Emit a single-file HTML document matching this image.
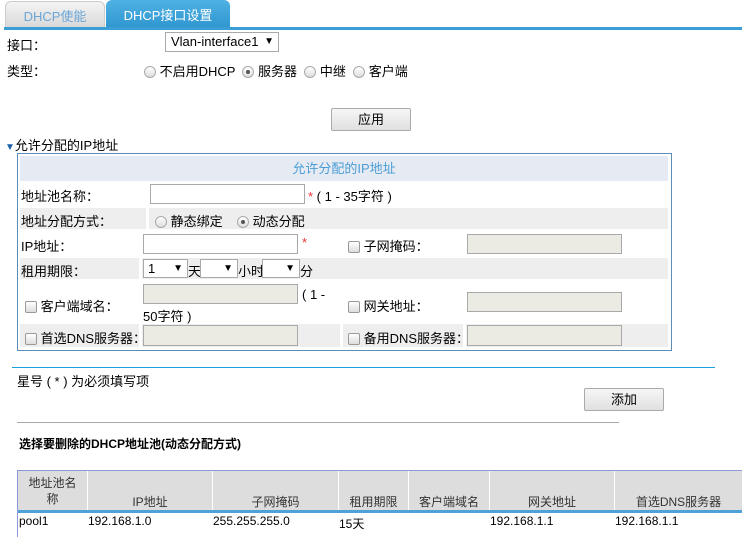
<!DOCTYPE html>
<html><head><meta charset="utf-8"><style>
body{margin:0;width:742px;height:537px;overflow:hidden;background:#fff;font-family:"Liberation Sans","Noto Sans CJK SC",sans-serif;font-size:13px;color:#000;position:relative}
.a{position:absolute;white-space:nowrap}
.rad{display:inline-block;width:12px;height:12px;border-radius:50%;border:1px solid #aaa;background:linear-gradient(#fff,#ddd);vertical-align:-2px;position:relative;box-sizing:border-box}
.rad.on::after{content:"";position:absolute;left:3px;top:3px;width:4px;height:4px;border-radius:50%;background:#555}
.cb{display:inline-block;width:12px;height:12px;border-radius:2px;border:1px solid #999;background:linear-gradient(#fff,#ddd);vertical-align:-2px;box-sizing:border-box}
.inp{position:absolute;border:1px solid #a9a9a9;background:#fff;box-sizing:border-box}
.dis{background:#ebebe4}
.btn{position:absolute;border:1px solid #aaa;background:linear-gradient(#f6f6f6,#e0e0e0);box-sizing:border-box;text-align:center;font-size:13px;border-radius:2px}
.sel{position:absolute;border:1px solid #a9a9a9;background:#fff;box-sizing:border-box;font-size:13px}
.sel::after{content:"▼";position:absolute;right:4px;top:50%;transform:translateY(-50%);font-size:10px;line-height:10px}
.band{position:absolute;background:#eeeeee}
.th{position:absolute;top:471px;height:39px;background:#dddddd;text-align:center;font-size:12px;color:#333;box-sizing:border-box;border-left:1px solid #fff}
.tb{font-size:12px}
</style></head><body>
<div class="a" style="left:5px;top:1px;width:100px;height:27px;background:linear-gradient(#f4f4f4,#d9d9d9);border-radius:6px 6px 0 0;border:1px solid #ccc;box-sizing:border-box;color:#6ba6d6;font-size:13px;text-align:center;line-height:30px">DHCP使能</div>
<div class="a" style="left:106px;top:0;width:124px;height:28px;background:linear-gradient(#4fb1e3,#2f96d0);border-radius:6px 6px 0 0;color:#fff;font-size:13px;text-align:center;line-height:32px">DHCP接口设置</div>
<div class="a" style="left:4px;top:27px;width:738px;height:3px;background:#3a9fd5"></div>

<div class="a" style="left:7px;top:35px">接口：</div>
<div class="sel" style="left:165px;top:32px;width:114px;height:20px;padding-left:5px;line-height:18px">Vlan-interface1</div>
<div class="a" style="left:7px;top:61px">类型：</div>
<div class="a" style="left:144px;top:61px"><span class="rad"></span> 不启用DHCP &nbsp;<span class="rad on"></span> 服务器 &nbsp;<span class="rad"></span> 中继 &nbsp;<span class="rad"></span> 客户端</div>
<div class="btn" style="left:331px;top:108px;width:80px;height:23px;line-height:21px">应用</div>
<div class="a" style="left:5px;top:135px"><span style="color:#1a5fa8;font-size:10px">▼</span>允许分配的IP地址</div>

<div class="a" style="left:17px;top:153px;width:655px;height:198px;border:1px solid #5b8db8;box-sizing:border-box"></div>
<div class="a" style="left:20px;top:156px;width:648px;height:25px;background:#e6eaf2;color:#4a9ed6;text-align:center;line-height:25px">允许分配的IP地址</div>
<div class="band" style="left:20px;top:208px;width:126px;height:21px"></div>
<div class="band" style="left:149px;top:208px;width:519px;height:21px"></div>
<div class="band" style="left:20px;top:258px;width:119px;height:21px"></div>
<div class="band" style="left:142px;top:258px;width:526px;height:21px"></div>
<div class="band" style="left:20px;top:324px;width:119px;height:23px"></div>
<div class="band" style="left:142px;top:324px;width:198px;height:23px"></div>
<div class="band" style="left:343px;top:324px;width:120px;height:23px"></div>
<div class="band" style="left:466px;top:324px;width:202px;height:23px"></div>

<div class="a" style="left:21px;top:186px">地址池名称：</div>
<div class="inp" style="left:150px;top:184px;width:155px;height:20px"></div>
<div class="a" style="left:308px;top:186px"><span style="color:#e33">*</span> ( 1 - 35字符 )</div>
<div class="a" style="left:21px;top:211px">地址分配方式：</div>
<div class="a" style="left:155px;top:211px"><span class="rad"></span> 静态绑定 &nbsp;&nbsp;&nbsp;<span class="rad on"></span> 动态分配</div>
<div class="a" style="left:21px;top:236px">IP地址：</div>
<div class="inp" style="left:143px;top:234px;width:155px;height:20px"></div>
<div class="a" style="left:302px;top:235px;color:#e33">*</div>
<div class="a" style="left:348px;top:236px"><span class="cb"></span> 子网掩码：</div>
<div class="inp dis" style="left:467px;top:234px;width:155px;height:20px"></div>
<div class="a" style="left:21px;top:261px">租用期限：</div>
<div class="sel" style="left:143px;top:259px;width:45px;height:19px;padding-left:4px;line-height:17px">1</div>
<div class="a" style="left:188px;top:261px">天</div>
<div class="sel" style="left:200px;top:259px;width:38px;height:19px"></div>
<div class="a" style="left:238px;top:261px">小时</div>
<div class="sel" style="left:262px;top:259px;width:38px;height:19px"></div>
<div class="a" style="left:300px;top:261px">分</div>
<div class="a" style="left:25px;top:296px"><span class="cb"></span> 客户端域名：</div>
<div class="inp dis" style="left:143px;top:284px;width:155px;height:20px"></div>
<div class="a" style="left:302px;top:287px">( 1 -</div>
<div class="a" style="left:143px;top:306px">50字符 )</div>
<div class="a" style="left:348px;top:296px"><span class="cb"></span> 网关地址：</div>
<div class="inp dis" style="left:467px;top:292px;width:155px;height:20px"></div>
<div class="a" style="left:25px;top:328px"><span class="cb"></span> 首选DNS服务器：</div>
<div class="inp dis" style="left:143px;top:325px;width:155px;height:21px"></div>
<div class="a" style="left:348px;top:328px"><span class="cb"></span> 备用DNS服务器：</div>
<div class="inp dis" style="left:467px;top:325px;width:155px;height:21px"></div>

<div class="a" style="left:12px;top:367px;width:703px;height:1px;background:#1ba1e2"></div>
<div class="a" style="left:17px;top:371px">星号 ( * ) 为必须填写项</div>
<div class="btn" style="left:584px;top:388px;width:80px;height:23px;line-height:21px">添加</div>
<div class="a" style="left:17px;top:422px;width:602px;height:1px;background:#aaa"></div>
<div class="a" style="left:19px;top:435px;font-weight:bold;font-size:12px">选择要删除的DHCP地址池(动态分配方式)</div>

<div class="a" style="left:17px;top:470px;width:725px;height:1px;background:#8a9ad8"></div>
<div class="a" style="left:17px;top:470px;width:1px;height:67px;background:#8a9ad8"></div>
<div class="th" style="left:18px;width:69px;border-left:none;padding-top:4px;line-height:16px">地址池名<br>称</div>
<div class="th" style="left:87px;width:125px;padding-top:22px">IP地址</div>
<div class="th" style="left:212px;width:126px;padding-top:22px">子网掩码</div>
<div class="th" style="left:338px;width:70px;padding-top:22px">租用期限</div>
<div class="th" style="left:408px;width:81px;padding-top:22px">客户端域名</div>
<div class="th" style="left:489px;width:125px;padding-top:22px">网关地址</div>
<div class="th" style="left:614px;width:128px;padding-top:22px">首选DNS服务器</div>
<div class="a" style="left:18px;top:510px;width:724px;height:3px;background:#4da3d9"></div>
<div class="a tb" style="left:19px;top:514px">pool1</div>
<div class="a tb" style="left:88px;top:514px">192.168.1.0</div>
<div class="a tb" style="left:213px;top:514px">255.255.255.0</div>
<div class="a tb" style="left:339px;top:515px">15天</div>
<div class="a tb" style="left:490px;top:514px">192.168.1.1</div>
<div class="a tb" style="left:615px;top:514px">192.168.1.1</div>
</body></html>
